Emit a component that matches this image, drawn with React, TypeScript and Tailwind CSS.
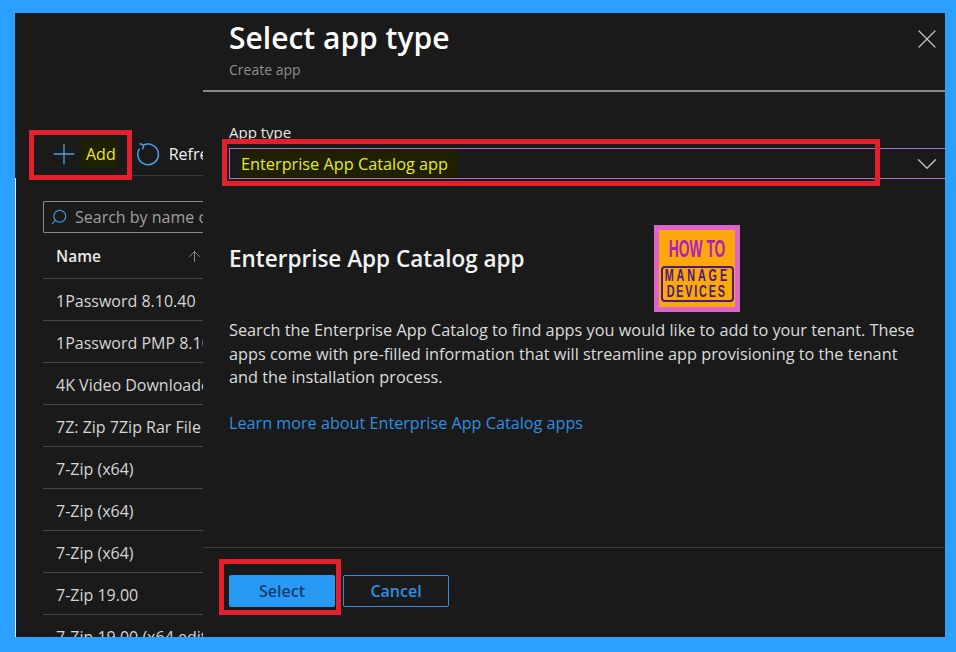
import { Plus, Search, ArrowUp, X, ChevronDown } from "lucide-react";

const ROWS = [
  "1Password 8.10.40",
  "1Password PMP 8.10.40",
  "4K Video Downloader",
  "7Z: Zip 7Zip Rar File",
  "7-Zip (x64)",
  "7-Zip (x64)",
  "7-Zip (x64)",
  "7-Zip 19.00",
  "7-Zip 19.00 (x64 edition)",
];

function RefreshIcon() {
  return (
    <svg width="24" height="24" viewBox="0 0 24 24" fill="none" stroke="#4aa0e6" strokeWidth="1.5" className="shrink-0">
      <path d="M7.5 3.2 A10.3 10.3 0 1 1 3.6 6.6" />
      <path d="M3.6 1.5 L7.8 3.2 L6.6 7.4" />
    </svg>
  );
}

function Logo() {
  return (
    <div className="flex h-[87px] w-[86px] flex-col items-center bg-[#dc64cc] p-[5px]">
      <div className="flex h-full w-full flex-col items-center bg-[#fba90a] pt-[7px]">
        <div className="font-['Liberation_Sans',sans-serif] text-[23px] leading-[24px] font-bold whitespace-nowrap text-[#b01cc0] [transform:scaleX(0.6)]">
          HOW TO
        </div>
        <div className="mt-[5px] flex h-[36px] w-[73px] flex-col items-center justify-center rounded-[4px] border-2 border-[#4a1a80] font-['Liberation_Sans',sans-serif] text-[15px] leading-[16px] font-bold text-[#4a1a80]">
          <span className="tracking-[4px] whitespace-nowrap [transform:scale(0.72,1.05)]">MANAGE</span>
          <span className="tracking-[2.5px] whitespace-nowrap [transform:scale(0.72,1.05)]">DEVICES</span>
        </div>
      </div>
    </div>
  );
}

export default function App() {
  return (
    <div className="relative h-[652px] w-[956px] overflow-hidden bg-[#2ba0ff] px-[15px] pt-[13px] pb-[15px] font-['Open_Sans',sans-serif]">
      <div className="flex h-full w-[930px] bg-[#1a1a1a]">
        {/* left blade: app list */}
        <div className="flex w-[188px] shrink-0 flex-col overflow-hidden">
          <div className="h-[165px] shrink-0 overflow-hidden">
            <div className="mt-[125px] ml-[28px] flex h-[38px] items-center border-b border-[#3b3a39] pb-[6px] pl-[4px] whitespace-nowrap">
              <Plus size={34} strokeWidth={0.9} className="shrink-0 text-[#4aa0e6]" />
              <span className="bg-[#1f2000] py-[3px] pr-[2px] pl-[5px] text-[16px] leading-[22px] text-[#e8ea2c]">Add</span>
              <div className="ml-[18px]">
                <RefreshIcon />
              </div>
              <span className="ml-[9px] text-[16px] text-[#f0f0f0]">Refresh</span>
            </div>
          </div>
          <div className="flex flex-1 flex-col overflow-hidden border-l border-[#dcecf5] pl-[27px]">
            <div className="mt-[23px] flex h-[32px] w-[160px] shrink-0 items-center overflow-hidden rounded-l-[2px] border-y border-l border-[#8a8886] pl-[6px] whitespace-nowrap">
              <Search size={18} strokeWidth={1.4} className="shrink-0 -scale-x-100 text-[#4aa0e6]" />
              <span className="ml-[7px] text-[16px] text-[#a19f9d]">Search by name or publisher</span>
            </div>
            <div className="flex h-[46px] w-[160px] shrink-0 items-center justify-between border-b border-[#484644] pt-[2px] pl-[13px]">
              <span className="text-[15.5px] font-semibold text-[#e8e8e8]">Name</span>
              <ArrowUp size={17} strokeWidth={1.2} className="text-[#a19f9d]" />
            </div>
            {ROWS.map((r, i) => (
              <div
                key={i}
                className="flex h-[42px] w-[160px] shrink-0 items-center overflow-hidden border-b border-[#484644] pt-[2px] pl-[13px] text-[16px] whitespace-nowrap text-[#d6d6d6]"
              >
                {r}
              </div>
            ))}
          </div>
        </div>

        {/* right blade */}
        <div className="flex min-w-0 flex-1 flex-col">
          <div className="flex h-[79px] shrink-0 justify-between border-b-2 border-[#8a8886] pl-[26px]">
            <div>
              <h1 className="pt-[1px] text-[30px] leading-[48px] font-semibold text-white">Select app type</h1>
              <div className="text-[14px] leading-[16px] text-[#8f8d8b]">Create app</div>
            </div>
            <X size={32} strokeWidth={0.9} className="mt-[10px] mr-[2px] text-[#c8c6c4]" />
          </div>
          <div className="flex-1 pt-[30px]">
            <div className="pl-[26px] text-[15px] leading-[20px] text-[#e8e8e8]">App type</div>
            <div className="mt-[6px] ml-[26px] flex h-[31px] items-center justify-between border-y border-l border-[#b070d0] pr-[1px] pl-[11px]">
              <span className="bg-[#1f2000] pt-[1px] pr-[10px] text-[16.3px] leading-[28px] text-[#e8ea2c]">Enterprise App Catalog app</span>
              <ChevronDown size={34} strokeWidth={0.9} className="shrink-0 text-[#c8c6c4]" />
            </div>
            <div className="mt-[46px] flex items-start pl-[26px]">
              <h2 className="mt-[18px] w-[425px] text-[22.5px] leading-[32px] font-semibold text-[#f2f2f2]">
                Enterprise App Catalog app
              </h2>
              <Logo />
            </div>
            <p className="mt-[7px] w-[716px] pl-[26px] text-[16.3px] leading-[23.5px] text-[#dcdcdc]">
              Search the Enterprise App Catalog to find apps you would like to add to your tenant. These apps come with pre-filled information that will streamline app provisioning to the tenant and the installation process.
            </p>
            <div className="mt-[21px] pl-[26px] text-[16.2px] leading-[24px] text-[#2f8fe0]">
              Learn more about Enterprise App Catalog apps
            </div>
          </div>
          <div className="flex h-[90px] shrink-0 gap-[8px] border-t border-[#3b3a39] pt-[27px] pl-[26px]">
            <button className="h-[32px] w-[106px] rounded-[2px] bg-[#2899f5] pb-[1px] text-[16px] font-semibold text-[#0f3f70]">
              Select
            </button>
            <button className="h-[32px] w-[106px] rounded-[2px] border border-[#2f8fe0] pb-[1px] text-[16px] font-semibold text-[#2f8fe0]">
              Cancel
            </button>
          </div>
        </div>
      </div>

      {/* red annotation boxes */}
      <div className="absolute top-[130px] left-[29px] h-[50px] w-[103px] border-[5px] border-[#e3202c]" />
      <div className="absolute top-[139px] left-[222px] h-[47px] w-[658px] border-[5px] border-[#e3202c]" />
      <div className="absolute top-[559px] left-[219px] h-[56px] w-[122px] border-[5px] border-[#e3202c]" />
    </div>
  );
}
